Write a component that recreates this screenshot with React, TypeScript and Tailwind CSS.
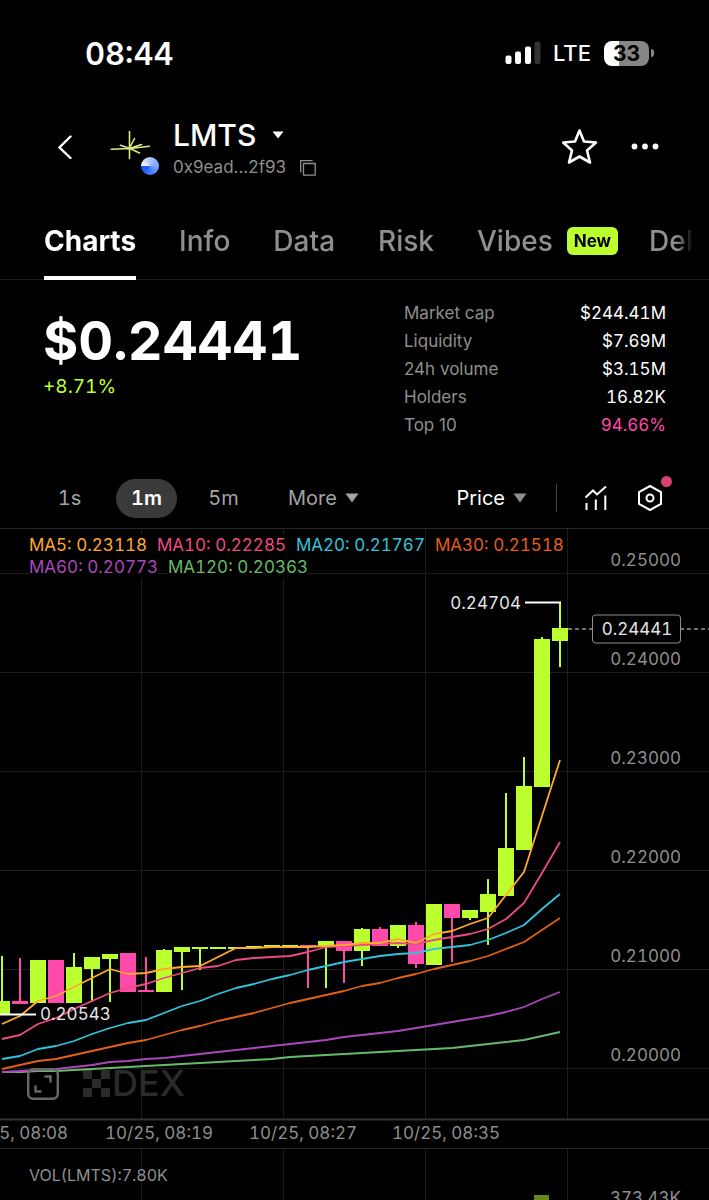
import { useState } from 'react';
import clsx from 'clsx';

const LIME = '#bcff2f';
const PINK = '#ff49ab';

interface Candle { up: boolean; high: number; top: number; bottom: number; low: number; }

// [up, high, body top, body bottom, low] on the chart's own y scale, one per minute
const RAW: [number, number, number, number, number][] = [
  [1, 956, 1001, 1015, 1015], [0, 958, 1001, 1004, 1004], [1, 960, 960, 1003, 1003], [0, 960, 960, 1003, 1003],
  [1, 953, 967, 1003, 1003], [1, 957, 957, 969, 1002], [1, 954, 954, 959, 1002], [0, 953, 953, 992, 992],
  [0, 957, 990, 992, 992], [1, 949, 950, 992, 992], [1, 947, 947, 952, 990], [1, 947, 947, 949, 970],
  [1, 947, 947, 949, 949], [1, 947, 947, 949, 949], [1, 946, 946, 948, 948], [1, 945, 945, 947, 947],
  [1, 945, 945, 947, 947], [0, 945, 945, 947, 988], [1, 941, 941, 947, 988], [0, 941, 941, 951, 983],
  [1, 928, 929, 951, 966], [0, 927, 929, 946, 946], [1, 925, 925, 946, 948], [0, 922, 925, 964, 968],
  [1, 904, 904, 965, 965], [0, 904, 904, 918, 962], [1, 910, 910, 918, 920], [1, 879, 894, 912, 945],
  [1, 793, 848, 896, 896], [1, 757, 786, 850, 850], [1, 637, 639, 787, 787], [1, 602, 628, 641, 667],
];

const CANDLES: Candle[] = RAW.map(([up, high, top, bottom, low]) => ({ up: up === 1, high, top, bottom, low }));

const AVERAGES = [
  {
    label: 'MA120: 0.20363', color: '#66bb6a',
    ys: [1072, 1072, 1071, 1071, 1070, 1069, 1068, 1067, 1066, 1065, 1064, 1063, 1062, 1061, 1060, 1059, 1057, 1056, 1055, 1054, 1053, 1052, 1051, 1050, 1049, 1048, 1046, 1044, 1042, 1040, 1036, 1032],
  },
  {
    label: 'MA60: 0.20773', color: '#ab47bc',
    ys: [1072, 1071, 1070, 1069, 1067, 1065, 1062, 1061, 1059, 1058, 1056, 1054, 1052, 1050, 1048, 1046, 1044, 1042, 1040, 1037, 1035, 1033, 1031, 1028, 1025, 1022, 1019, 1016, 1012, 1007, 999, 992],
  },
  {
    label: 'MA30: 0.21518', color: '#e65f16',
    ys: [1069, 1065, 1061, 1059, 1055, 1051, 1047, 1043, 1040, 1035, 1030, 1026, 1021, 1017, 1013, 1008, 1003, 999, 995, 991, 986, 983, 978, 974, 969, 965, 961, 956, 949, 942, 930, 918],
  },
  {
    label: 'MA20: 0.21767', color: '#30c4dc',
    ys: [1059, 1056, 1049, 1046, 1041, 1034, 1028, 1023, 1020, 1013, 1006, 1001, 994, 988, 984, 979, 975, 970, 966, 962, 959, 956, 954, 953, 949, 947, 945, 940, 933, 925, 909, 894],
  },
  {
    label: 'MA10: 0.22285', color: '#ee4b83',
    ys: [1039, 1035, 1024, 1018, 1009, 1001, 993, 988, 984, 978, 973, 968, 966, 960, 958, 957, 956, 952, 947, 946, 945, 944, 943, 944, 940, 937, 934, 929, 919, 903, 873, 842],
  },
  {
    label: 'MA5: 0.23118', color: '#ffa92e',
    ys: [1024, 1016, 1001, 996, 987, 978, 969, 974, 973, 969, 967, 966, 957, 948, 948, 947, 947, 947, 946, 945, 943, 943, 939, 943, 934, 931, 924, 918, 895, 872, 816, 760],
  },
];

const LEGEND = [...AVERAGES].reverse();

const GRID_X = [142, 284, 426, 568];
const PRICE_LEVELS = ['0.25000', '0.24000', '0.23000', '0.22000', '0.21000', '0.20000'];
const TIMES = [
  { x: 14, label: '10/25, 08:08' },
  { x: 159, label: '10/25, 08:19' },
  { x: 303, label: '10/25, 08:27' },
  { x: 446, label: '10/25, 08:35' },
];

const STATS = [
  { label: 'Market cap', value: '$244.41M' },
  { label: 'Liquidity', value: '$7.69M' },
  { label: '24h volume', value: '$3.15M' },
  { label: 'Holders', value: '16.82K' },
  { label: 'Top 10', value: '94.66%', hot: true },
];

const TABS = ['Charts', 'Info', 'Data', 'Risk', 'Vibes', 'DeFi'];

const xAt = (i: number) => 2 + i * 18;

function Caret({ className }: { className?: string }) {
  return (
    <svg viewBox="0 0 14 10" className={clsx('h-[10px] w-[14px]', className)} fill="currentColor" aria-hidden="true">
      <path d="M0.5 0.5h13L7 9.5z" />
    </svg>
  );
}

function StatusBar() {
  return (
    <div className="flex h-[106px] items-center justify-between pr-[55px] pl-[85px]">
      <span className="text-[31px] leading-none font-semibold tabular-nums">08:44</span>
      <div className="flex items-center">
        <svg viewBox="0 0 36 24" className="h-6 w-9" aria-hidden="true">
          <rect x="0.5" y="14.5" width="6" height="8.5" rx="2" fill="#fff" />
          <rect x="10" y="10.5" width="6" height="12.5" rx="2" fill="#fff" />
          <rect x="20" y="5.5" width="6" height="17.5" rx="2" fill="#fff" />
          <rect x="29.5" y="0.5" width="6" height="22.5" rx="2" fill="#333" />
        </svg>
        <span className="ml-3 text-[22px] leading-none font-medium">LTE</span>
        <div className="ml-[13px] flex h-[25px] w-[45px] items-center justify-center rounded-lg bg-[linear-gradient(90deg,#fff_34%,#868686_34%)] text-[21px] leading-none font-bold text-black">
          33
        </div>
        <div className="ml-[2px] h-2 w-[3px] rounded-r-full bg-[#868686]" />
      </div>
    </div>
  );
}

function TokenLogo() {
  return (
    <div className="relative h-10 w-10">
      <svg viewBox="0 0 40 40" className="h-10 w-10" fill="none" stroke="#dcea83" strokeWidth="1.6" strokeLinecap="round" aria-hidden="true">
        <path d="M19.500 4.500v27M1.200 22.200L20 21.500L39.500 19.200M10.500 18.300L20 21.500L29.500 26M19 22l5.500-10.500M19.500 21.500l12-4" />
      </svg>
      <span className="absolute -right-[9px] -bottom-2 h-[18px] w-[18px] rounded-full bg-[conic-gradient(from_270deg,#f4f7ff,#a9c3ff_25%,#7ca6ff_50%,#1e5cff_90%)]" />
    </div>
  );
}

function Header() {
  return (
    <header className="flex h-[82px] items-center pr-[50px] pl-[57px]">
      <button aria-label="Back" className="h-6 w-4">
        <svg viewBox="0 0 16 24" className="h-6 w-4" fill="none" stroke="#fff" strokeWidth="2.4" strokeLinecap="round">
          <path d="M13.500 1.500L2.500 12.500l11 10.500" />
        </svg>
      </button>
      <div className="ml-[37px]">
        <TokenLogo />
      </div>
      <div className="mt-[6px] ml-[23px]">
        <button className="flex items-center gap-4 leading-9">
          <span className="text-[30px] font-medium">LMTS</span>
          <svg viewBox="0 0 12 8" className="h-2 w-3" fill="#fff" aria-hidden="true">
            <path d="M0.500 0.500h11L6 7.500z" />
          </svg>
        </button>
        <div className="flex h-[30px] items-center gap-[14px] text-[#8f8f8f]">
          <span className="text-[17px]">0x9ead...2f93</span>
          <button aria-label="Copy address">
            <svg viewBox="0 0 16 16" className="h-4 w-4" fill="none" stroke="currentColor" strokeWidth="1.3">
              <path d="M3.500 3.500h11.700v11.700H3.500z" />
              <path d="M0.700 12.500V0.700h12" />
            </svg>
          </button>
        </div>
      </div>
      <button aria-label="Favorite" className="ml-auto">
        <svg viewBox="0 0 36 36" className="h-9 w-9" fill="none" stroke="#fff" strokeWidth="2.6" strokeLinejoin="round">
          <path d="M17.500 1.500L22 12.500L34 13.500L25 21.500L28 33.500L17.500 27.500L7 33.500L10 21.500L1.200 13.500L13 12.500Z" />
        </svg>
      </button>
      <button aria-label="More options" className="ml-[33px]">
        <svg viewBox="0 0 28 8" className="h-2 w-7" fill="#fff">
          <circle cx="3.500" cy="3.500" r="2.900" />
          <circle cx="14" cy="3.500" r="2.900" />
          <circle cx="24.500" cy="3.500" r="2.900" />
        </svg>
      </button>
    </header>
  );
}

function Tabs() {
  const [active, setActive] = useState('Charts');

  return (
    <nav className="mt-[14px] border-b border-[#1c1c1c]">
      <div className="mr-4 -mb-px flex gap-[43px] overflow-hidden pl-11 [mask-image:linear-gradient(90deg,#000_calc(100%-16px),transparent)]">
        {TABS.map((tab) => (
          <button
            key={tab}
            onClick={() => setActive(tab)}
            className={clsx(
              'flex h-[78px] shrink-0 items-center gap-[14px] border-b-4 pt-1 text-[28px] leading-none last:-ml-3',
              tab === active ? 'border-white font-bold text-white' : 'border-transparent font-medium text-[#8f8f8f]',
            )}
          >
            {tab}
            {tab === 'Vibes' && (
              <span className="rounded-md bg-[#bcff2f] px-[7px] text-[17px] leading-7 font-bold text-black">New</span>
            )}
          </button>
        ))}
      </div>
    </nav>
  );
}

function Summary() {
  return (
    <section className="flex h-[188px] justify-between pt-[19px] pr-[43px] pl-[43px]">
      <div className="pt-3">
        <p className="text-[54px] leading-[60px] font-bold tabular-nums">$0.24441</p>
        <p className="text-[19px] leading-8 text-[#bcff2f] tabular-nums">+8.71%</p>
      </div>
      <dl className="w-[262px]">
        {STATS.map(({ label, value, hot }) => (
          <div key={label} className="flex justify-between text-[17px] leading-7">
            <dt className="text-[#8f8f8f]">{label}</dt>
            <dd className={clsx('tabular-nums', hot ? 'text-[#ff49ab]' : 'text-white')}>{value}</dd>
          </div>
        ))}
      </dl>
    </section>
  );
}

function Toolbar() {
  const [interval, setInterval] = useState('1m');

  return (
    <div className="flex h-[60px] items-center pr-[45px] pl-[39px] text-[20px] text-[#a3a3a3] tabular-nums">
      <div className="flex items-center gap-4">
        {['1s', '1m', '5m'].map((item) => (
          <button
            key={item}
            onClick={() => setInterval(item)}
            className={clsx('h-[39px] w-[61px] rounded-full', item === interval && 'bg-[#3a3a3a] font-semibold text-white')}
          >
            {item}
          </button>
        ))}
      </div>
      <button className="ml-[34px] flex items-center gap-2">
        More
        <Caret />
      </button>
      <button className="ml-auto flex items-center gap-2 text-white">
        Price
        <Caret className="text-[#8f8f8f]" />
      </button>
      <span className="ml-[29px] h-7 w-px bg-[#444]" />
      <button aria-label="Indicators" className="ml-[27px]">
        <svg viewBox="0 0 24 26" className="h-[26px] w-6" fill="none" stroke="#fff" strokeWidth="2">
          <path d="M1.500 12.500L9 5.500l4 4L22 1.500M2.500 18v7M11.800 14.500V25M21.300 10.500V25" />
        </svg>
      </button>
      <button aria-label="Chart settings" className="relative ml-[28px]">
        <svg viewBox="0 0 28 28" className="h-7 w-7" fill="none" stroke="#fff" strokeWidth="2">
          <path d="M14 2L25 8v12L14 26L3 20V8z" />
          <circle cx="14" cy="14" r="3.500" />
        </svg>
        <span className="absolute -top-2 -right-2 h-[11px] w-[11px] rounded-full bg-[#d6456f]" />
      </button>
    </div>
  );
}

function PriceChart() {
  return (
    <section className="relative">
      <svg viewBox="0 528 709 621" className="block w-full tabular-nums" role="img" aria-label="LMTS price">
        <g stroke="#1c1c1c">
          {GRID_X.map((x) => <path key={x} d={`M${x - 0.5} 528V1119`} />)}
          {PRICE_LEVELS.map((p, i) => <path key={p} d={`M0 ${573.5 + i * 99}H709`} />)}
        </g>
        <path d="M0 528.500H709M0 1148.500H709" stroke="#262626" />
        <path d="M0 1119.500H709" stroke="#333" strokeWidth="2" />

        {/* Watermark */}
        <g fill="#2b2b2b">
          <path d="M83 1070h9v9h-9zM101 1070h9v9h-9zM92 1079h9v9h-9zM83 1088h9v9h-9zM101 1088h9v9h-9z" />
          <text x="112" y="1096" fontSize="36" fontWeight="500">DEX</text>
        </g>

        {/* Candles */}
        {CANDLES.map((c, i) => (
          <g key={i} fill={c.up ? LIME : PINK}>
            <rect x={xAt(i) - 1} y={c.high} width="2" height={c.low - c.high} />
            <rect x={xAt(i) - 8} y={c.top} width="16" height={c.bottom - c.top} />
          </g>
        ))}

        {/* Moving averages */}
        {AVERAGES.map(({ label, color, ys }) => (
          <polyline
            key={label}
            points={ys.map((y, i) => `${xAt(i)},${y}`).join(' ')}
            fill="none"
            stroke={color}
            strokeWidth="1.8"
            strokeLinejoin="round"
          />
        ))}

        {/* High and low markers */}
        <path d="M525 602.500H561M0 1014.500H36" stroke="#fff" strokeWidth="2" />
        <g fontSize="17" fill="#e5e5e5">
          <text x="521" y="609" textAnchor="end">0.24704</text>
          <text x="40" y="1020">0.20543</text>
        </g>

        {/* Price scale */}
        <g fontSize="17" fill="#8f8f8f" textAnchor="end">
          {PRICE_LEVELS.map((p, i) => <text key={p} x="681" y={566 + i * 99}>{p}</text>)}
        </g>
        <path d="M568 629H709" stroke="#999" strokeWidth="1.500" strokeDasharray="4 3" />
        <rect x="592.500" y="615" width="88" height="28" rx="3" fill="#000" stroke="#8f8f8f" />
        <text x="637" y="635" fontSize="17" fill="#e5e5e5" textAnchor="middle">0.24441</text>

        {/* Time scale */}
        <g fontSize="17" fill="#8f8f8f" textAnchor="middle">
          {TIMES.map(({ x, label }) => <text key={label} x={x} y="1139">{label}</text>)}
        </g>
      </svg>

      <ul className="absolute top-[6px] left-[29px] flex w-[560px] flex-wrap gap-x-[10px] text-[17px] leading-[22px] tabular-nums">
        {LEGEND.map(({ label, color }) => <li key={label} className="bg-black" style={{ color }}>{label}</li>)}
      </ul>

      <button aria-label="Full screen" className="absolute bottom-[49px] left-[27px]">
        <svg viewBox="0 0 32 32" className="h-8 w-8" fill="none" stroke="#686868" strokeWidth="2.400">
          <rect x="1.200" y="1.200" width="29.600" height="29.600" rx="5" />
          <path d="M17.500 8.500h6v6M8.500 17.500v6h6" />
        </svg>
      </button>
    </section>
  );
}

function VolumeChart() {
  return (
    <section className="max-h-[51px] overflow-hidden">
      <svg viewBox="0 1149 709 51" className="block w-full tabular-nums" role="img" aria-label="LMTS volume">
        <g stroke="#1c1c1c">
          {GRID_X.map((x) => <path key={x} d={`M${x - 0.5} 1149V1200`} />)}
        </g>
        <text x="29" y="1181" fontSize="16" fill="#8f8f8f">VOL(LMTS):7.80K</text>
        <rect x="534" y="1195" width="15" height="5" fill="#65871c" />
        <text x="681" y="1204" fontSize="17" fill="#8f8f8f" textAnchor="end">373.43K</text>
      </svg>
    </section>
  );
}

export default function App() {
  return (
    <main className="min-h-screen overflow-hidden bg-black font-[Inter,'Liberation_Sans',sans-serif] text-white">
      <StatusBar />
      <Header />
      <Tabs />
      <Summary />
      <Toolbar />
      <PriceChart />
      <VolumeChart />
    </main>
  );
}
